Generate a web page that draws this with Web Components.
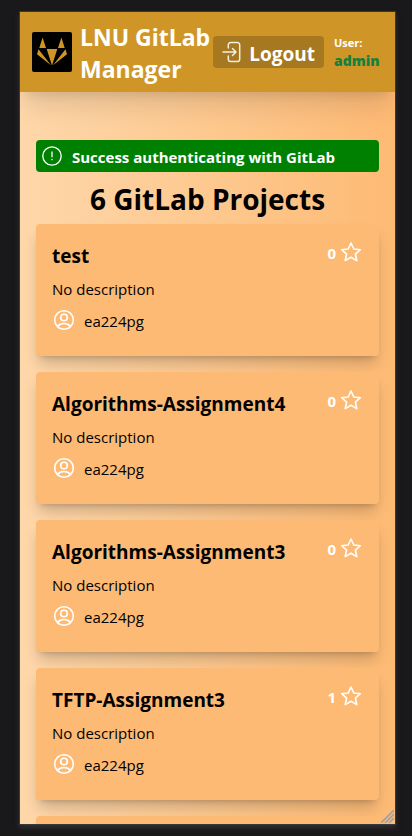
<!DOCTYPE html>
<html lang="en">
<head>
<meta charset="utf-8">
<meta name="viewport" content="width=device-width, initial-scale=1">
<title>LNU GitLab Manager</title>
<style>
  html { height: 100%; background: #19191b; }
  body {
    box-sizing: border-box;
    height: 100%;
    margin: 0;
    padding: 12px 17px 12px 20px;
    overflow: hidden;
    font-family: "Open Sans", "Noto Sans", sans-serif;
    font-size: 15px;
    line-height: 24px;
    color: #000;
  }
</style>
</head>
<body>
<app-window>
  <app-header slot="header" user="admin">LNU GitLab Manager</app-header>
  <flash-message>Success authenticating with GitLab</flash-message>
  <project-list heading="6 GitLab Projects">
    <project-card name="test" stars="0" owner="ea224pg">No description</project-card>
    <project-card name="Algorithms-Assignment4" stars="0" owner="ea224pg">No description</project-card>
    <project-card name="Algorithms-Assignment3" stars="0" owner="ea224pg">No description</project-card>
    <project-card name="TFTP-Assignment3" stars="1" owner="ea224pg">No description</project-card>
    <project-card></project-card>
  </project-list>
</app-window>

<template id="app-window">
  <style>
    :host {
      display: flex; flex-direction: column; position: relative;
      height: 100%; overflow: hidden;
      background: linear-gradient(to right, #fed7aa, #fdba74);
      outline: 1px solid #38383c;
      box-shadow: 0 3px 5px 1px #2e2e32;
    }
    main { padding: 48px 16px 16px; }
    .grip { position: absolute; right: 1px; bottom: 1px; width: 13px; height: 13px; }
  </style>
  <slot name="header"></slot>
  <main><slot></slot></main>
  <svg class="grip" viewBox="0 0 13 13" stroke="#a39f9a" stroke-width="1.600" aria-hidden="true"><path d="M0 13 13 0M4 13 13 4M8 13 13 8"/></svg>
</template>

<template id="app-header">
  <style>
    :host {
      display: flex; align-items: center; flex: none; position: relative;
      box-sizing: border-box; padding: 7px 12px;
      background: #cf9627; color: #fff;
      box-shadow: 0 20px 25px -5px rgb(0 0 0 / .1), 0 8px 10px -6px rgb(0 0 0 / .1);
    }
    .logo { flex: none; width: 40px; height: 40px; margin-right: 8px; }
    h1 { flex: 1; min-width: 0; margin: 0; padding-top: 2px; font-size: 23px; line-height: 32px; font-weight: 700; }
    button {
      display: flex; align-items: center; gap: 5px; flex: none;
      height: 32px; margin: 0 10px 0 0; padding: 0 9px; border: 0; border-radius: 4px;
      background: #a67820; color: #fff;
      font-family: inherit; font-size: 19px; font-weight: 700; line-height: 32px; cursor: pointer;
    }
    button svg { width: 22px; height: 24px; }
    button span { padding-top: 3px; }
    .user { display: grid; flex: none; width: 49px; font-weight: 700; }
    .user span { font-size: 11px; line-height: 16px; }
    .user strong { font-size: 14px; line-height: 19px; color: #15803d; }
  </style>
  <svg class="logo" viewBox="0 0 40 40" aria-hidden="true">
    <rect width="40" height="40" rx="2" fill="#000"/>
    <path fill="#cf9627" d="M10.600 5.500 14 16H7.300ZM29.400 5.500 32.700 16H26ZM14.700 17h10.600L20 33.500ZM6.500 17.200 19 33.200 5 22.300ZM33.500 17.200 21 33.200 35 22.300Z"/>
  </svg>
  <h1><slot></slot></h1>
  <button type="button">
    <svg viewBox="0 0 22 24" fill="none" stroke="#fff" stroke-opacity=".88" stroke-width="1.500" stroke-linecap="round" stroke-linejoin="round" aria-hidden="true"><path d="M6.300 8V4.800A2.300 2.300 0 0 1 8.600 2.500H15.400A2.300 2.300 0 0 1 17.700 4.800V19.200A2.300 2.300 0 0 1 15.400 21.500H8.600A2.300 2.300 0 0 1 6.300 19.200V16M1 12H13.500M10.500 8.500 14 12 10.500 15.500"/></svg>
    <span>Logout</span>
  </button>
  <div class="user"><span>User:</span><strong></strong></div>
</template>

<template id="flash-message">
  <style>
    :host {
      display: flex; align-items: center; gap: 10px;
      height: 32px; padding: 0 6px; border-radius: 4px;
      background: #008000; color: #fff; font-size: 15px; font-weight: 700;
    }
    svg { flex: none; width: 20px; height: 20px; }
    span { padding-top: 2px; }
  </style>
  <svg viewBox="0 0 20 20" fill="none" stroke="#fff" stroke-width="1.300" stroke-linecap="round" aria-hidden="true"><circle cx="10" cy="10" r="9.200"/><path d="M10 6V10.800M10 13.500v.2"/></svg>
  <span role="status"><slot></slot></span>
</template>

<template id="project-list">
  <style>
    :host { display: block; }
    h2 { margin: 9px 0 7px; font-size: 28px; line-height: 36px; font-weight: 700; text-align: center; }
    .list { display: grid; gap: 16px; }
  </style>
  <h2></h2>
  <div class="list"><slot></slot></div>
</template>

<template id="project-card">
  <style>
    :host {
      display: block; position: relative; box-sizing: border-box; min-height: 132px; padding: 16px; border-radius: 4px;
      background: #fdba74;
      box-shadow: 0 10px 15px -3px rgb(0 0 0 / .2), 0 4px 6px -4px rgb(0 0 0 / .2);
    }
    header { display: flex; align-items: flex-start; justify-content: space-between; }
    h3 { margin: 0 0 5px; font-size: 19px; line-height: 32px; font-weight: 700; }
    .stars { display: flex; align-items: center; gap: 4px; height: 24px; padding-right: 1px; color: #fff; font-weight: 700; }
    .stars span { padding-top: 2px; }
    p { margin: 0 0 8px; }
    .owner { display: flex; align-items: center; gap: 8px; }
    svg { width: 24px; height: 24px; fill: none; stroke: #fff; stroke-width: 1.600; stroke-linejoin: round; }
    .stars svg { width: 22px; }
  </style>
  <header>
    <h3></h3>
    <div class="stars"><span></span><svg viewBox="1 0 22 24" role="img" aria-label="stars"><path d="m12 3 2.800 6 6.500.7-4.900 4.400 1.400 6.500L12 17.300l-5.800 3.300 1.400-6.500-4.900-4.400 6.500-.7Z"/></svg></div>
  </header>
  <p><slot></slot></p>
  <div class="owner">
    <svg viewBox="0 0 24 24" aria-hidden="true"><circle cx="12" cy="11" r="9.300"/><circle cx="12" cy="8.500" r="3.300"/><path d="M5.500 17.500C7 15.500 9 14.500 12 14.500S17 15.500 18.500 17.500"/></svg>
    <span></span>
  </div>
</template>

<script>
  class TemplateElement extends HTMLElement {
    constructor() {
      super();
      const template = document.getElementById(this.localName);
      this.attachShadow({ mode: "open" }).append(template.content.cloneNode(true));
    }
    fill(selector, attribute) {
      this.shadowRoot.querySelector(selector).textContent = this.getAttribute(attribute) || "";
    }
  }
  customElements.define("app-window", class extends TemplateElement {});
  customElements.define("flash-message", class extends TemplateElement {});
  customElements.define("app-header", class extends TemplateElement {
    connectedCallback() { this.fill("strong", "user"); }
  });
  customElements.define("project-list", class extends TemplateElement {
    connectedCallback() { this.fill("h2", "heading"); }
  });
  customElements.define("project-card", class extends TemplateElement {
    connectedCallback() {
      this.fill("h3", "name");
      this.fill(".stars span", "stars");
      this.fill(".owner span", "owner");
    }
  });
</script>
</body>
</html>
